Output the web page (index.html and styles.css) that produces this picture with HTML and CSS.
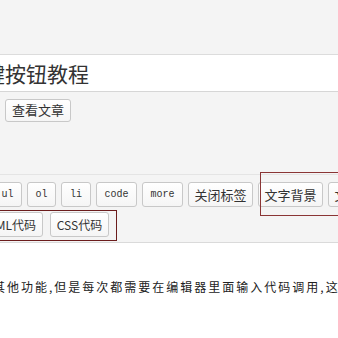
FILE: index.html
```html
<!DOCTYPE html>
<html lang="zh">
<head>
<meta charset="utf-8">
<link rel="stylesheet" href="styles.css">
</head>
<body>
<div class="page">
  <div class="top"></div>
  <div class="title"><span class="title-text">快捷键按钮教程</span></div>
  <div class="actions"><button class="btn view">查看文章</button></div>
  <div class="editor">
    <div class="toolbar">
      <div class="row row1">
        <button class="btn mono w29 first">ul</button>
        <button class="btn mono w29">ol</button>
        <button class="btn mono w30">li</button>
        <button class="btn mono w41">code</button>
        <button class="btn mono w41">more</button>
        <button class="btn cn w65">关闭标签</button>
        <button class="btn cn w65">文字背景</button>
        <button class="btn cn w65">文字颜色</button>
      </div>
      <div class="row row2">
        <button class="btn cn2 w70 first2">HTML代码</button>
        <button class="btn cn2 w59">CSS代码</button>
      </div>
    </div>
    <div class="content"><p class="para">其他功能,但是每次都需要在编辑器里面输入代码调用,这样比较麻烦</p></div>
  </div>
  <div class="mark mark1"></div>
  <div class="mark mark2"></div>
</div>
</body>
</html>
```
FILE: styles.css
```css
html, body {
  margin: 0;
  padding: 0;
  background: #ffffff;
  overflow: hidden;
}
.page {
  position: relative;
  width: 338px;
  height: 338px;
  overflow: hidden;
  font-family: "Noto Sans CJK SC", "Liberation Sans", sans-serif;
  color: #333;
}
.top {
  height: 54px;
  background: #f4f4f4;
  border-bottom: 1px solid #dcdcdc;
}
.title {
  height: 36px;
  background: #fff;
  border-bottom: 1px solid #d6d6d6;
  overflow: hidden;
  white-space: nowrap;
}
.title-text {
  display: block;
  font-size: 21px;
  line-height: 36px;
  margin-left: -58px;
  color: #333;
}
.actions {
  background: #f4f4f4;
  padding: 4px 0 0 5px;
  height: 83px;
  box-sizing: border-box;
  border-bottom: 1px solid #e4e4e4;
}
.btn {
  height: 25px;
  padding: 0;
  border: 1px solid #c8c8c8;
  border-radius: 3px;
  background: linear-gradient(#ffffff, #f5f5f5);
  color: #333;
  box-sizing: border-box;
  flex: none;
}
.view {
  width: 66px;
  height: 23px;
  font-family: "Noto Sans CJK SC", sans-serif;
  font-size: 13px;
  line-height: 20px;
}
.editor {
  background: #f4f4f4;
}
.toolbar {
  padding: 7px 0 5px 0;
  border-bottom: 1px solid #dadada;
}
.row {
  display: flex;
  gap: 5px;
  white-space: nowrap;
}
.row2 {
  margin-top: 5px;
  gap: 7px;
}
.first { margin-left: -7px; }
.first2 { margin-left: -27px; }
.mono {
  font-family: "Liberation Mono", "DejaVu Sans Mono", monospace;
  font-size: 10px;
  color: #333;
}
.cn {
  font-family: "Noto Sans CJK SC", sans-serif;
  font-size: 13px;
}
.cn2 {
  font-family: "Noto Sans CJK SC", sans-serif;
  font-size: 12px;
}
.w29 { width: 29px; }
.w30 { width: 30px; }
.w41 { width: 41px; }
.w59 { width: 59px; }
.w65 { width: 65px; }
.w70 { width: 70px; }
.content {
  background: #fff;
  height: 100px;
  padding-top: 36px;
  box-sizing: border-box;
  overflow: hidden;
}
.para {
  margin: 0 0 0 -7px;
  font-size: 12px;
  letter-spacing: 2px;
  line-height: 16px;
  white-space: nowrap;
  color: #222;
}
.mark {
  position: absolute;
  border: 1px solid #8a3535;
  box-sizing: border-box;
  pointer-events: none;
}
.mark1 {
  left: 260px;
  top: 172px;
  width: 100px;
  height: 44px;
}
.mark2 {
  left: -5px;
  top: 210px;
  width: 122px;
  height: 31px;
  border-color: #6b1c1c;
}
```
